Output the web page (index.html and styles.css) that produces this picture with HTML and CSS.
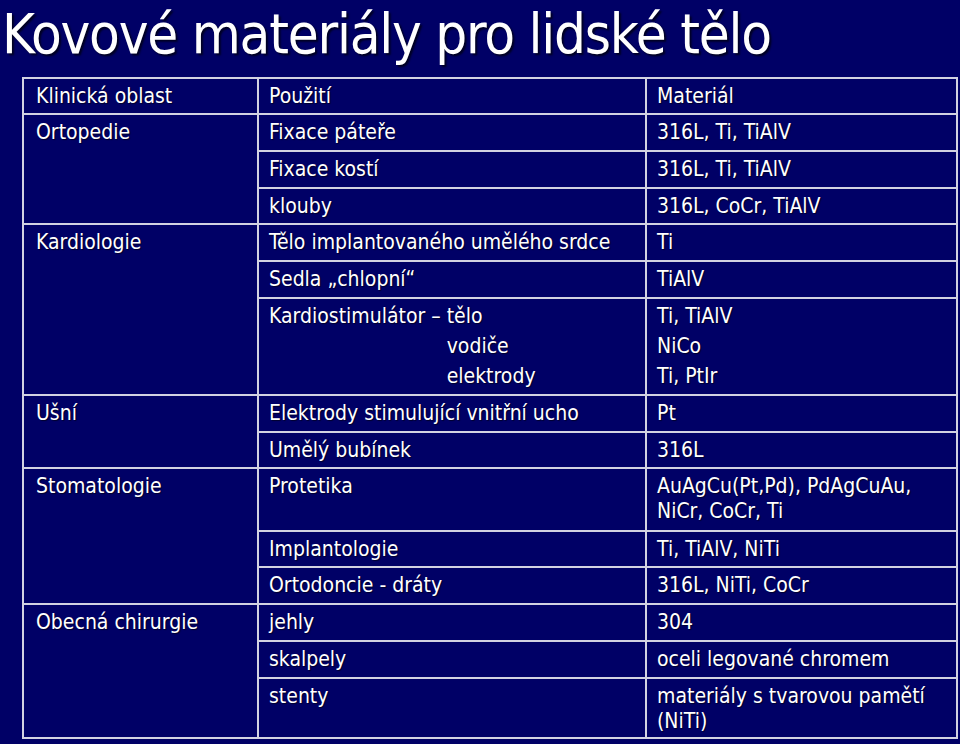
FILE: index.html
```html
<!DOCTYPE html>
<html lang="cs">
<head>
<meta charset="utf-8">
<title>Kovové materiály pro lidské tělo</title>
<link rel="stylesheet" href="styles.css">
</head>
<body>
<div class="slide">
  <h1 class="title">Kovové materiály pro lidské tělo</h1>
  <table class="grid">
    <colgroup>
      <col class="c1"><col class="c2"><col class="c3">
    </colgroup>
    <tr class="h36">
      <td class="area">Klinická oblast</td>
      <td>Použití</td>
      <td>Materiál</td>
    </tr>
    <tr class="h37">
      <td class="area" rowspan="3">Ortopedie</td>
      <td>Fixace páteře</td>
      <td>316L, Ti, TiAlV</td>
    </tr>
    <tr class="h37">
      <td>Fixace kostí</td>
      <td>316L, Ti, TiAlV</td>
    </tr>
    <tr class="h36">
      <td>klouby</td>
      <td>316L, CoCr, TiAlV</td>
    </tr>
    <tr class="h37">
      <td class="area" rowspan="3">Kardiologie</td>
      <td>Tělo implantovaného umělého srdce</td>
      <td>Ti</td>
    </tr>
    <tr class="h37">
      <td>Sedla „chlopní“</td>
      <td>TiAlV</td>
    </tr>
    <tr class="h97">
      <td><span class="lead">Kardiostimulátor – </span><span class="stack"><span>tělo</span><span>vodiče</span><span>elektrody</span></span></td>
      <td><span class="stack"><span>Ti, TiAlV</span><span>NiCo</span><span>Ti, PtIr</span></span></td>
    </tr>
    <tr class="h37">
      <td class="area" rowspan="2">Ušní</td>
      <td>Elektrody stimulující vnitřní ucho</td>
      <td>Pt</td>
    </tr>
    <tr class="h36">
      <td>Umělý bubínek</td>
      <td>316L</td>
    </tr>
    <tr class="h63">
      <td class="area" rowspan="3">Stomatologie</td>
      <td>Protetika</td>
      <td>AuAgCu(Pt,Pd), PdAgCuAu, NiCr, CoCr, Ti</td>
    </tr>
    <tr class="h36">
      <td>Implantologie</td>
      <td>Ti, TiAlV, NiTi</td>
    </tr>
    <tr class="h37">
      <td>Ortodoncie - dráty</td>
      <td>316L, NiTi, CoCr</td>
    </tr>
    <tr class="h37">
      <td class="area" rowspan="3">Obecná chirurgie</td>
      <td>jehly</td>
      <td>304</td>
    </tr>
    <tr class="h37">
      <td>skalpely</td>
      <td>oceli legované chromem</td>
    </tr>
    <tr class="h60">
      <td>stenty</td>
      <td>materiály s tvarovou pamětí (NiTi)</td>
    </tr>
  </table>
</div>
</body>
</html>
```
FILE: styles.css
```css
html, body {
  margin: 0;
  padding: 0;
  background: #000066;
}
.slide {
  width: 960px;
  height: 744px;
  overflow: hidden;
  background: #000066;
  color: #ffffff;
  font-family: "DejaVu Sans Condensed", "DejaVu Sans", sans-serif;
}
.title {
  margin: 0;
  padding: 2px 0 0 2px;
  height: 74px;
  box-sizing: border-box;
  font-size: 56px;
  line-height: 64px;
  letter-spacing: -1.25px;
  font-weight: normal;
  white-space: nowrap;
  text-shadow: 2px 2px 2px #000022;
}
.grid {
  margin: 3px 0 0 22px;
  width: 934px;
  border-collapse: collapse;
  table-layout: fixed;
  border: 2px solid #e6e6f0;
  font-size: 21px;
  line-height: 25px;
}
.c1 { width: 235px; }
.c2 { width: 388px; }
.c3 { width: 311px; }
.grid td {
  border: 2px solid #d2d2e2;
  vertical-align: top;
  padding: 5px 6px 0 10px;
  text-shadow: 1px 1px 1px rgba(0, 0, 20, 0.7);
}
.grid td.area {
  padding-left: 12px;
}
.h36 { height: 36px; }
.h37 { height: 37px; }
.h60 { height: 60px; }
.h63 { height: 63px; }
.h97 { height: 97px; }
.lead {
  vertical-align: top;
  white-space: pre;
}
.stack {
  display: inline-flex;
  flex-direction: column;
  gap: 5px;
  vertical-align: top;
}
```
